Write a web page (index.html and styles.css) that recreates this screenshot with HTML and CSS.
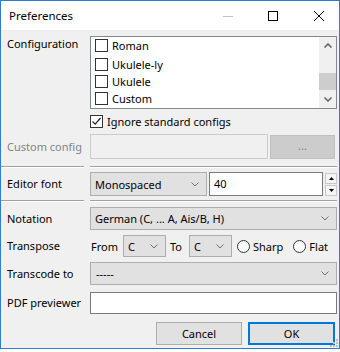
FILE: index.html
```html
<!DOCTYPE html>
<html lang="en">

<head>
    <meta charset="UTF-8">
    <title>Preferences</title>
    <link rel="stylesheet" href="styles.css">
</head>

<body>
    <div class="window">
        <div class="titlebar">
            <span class="title">Preferences</span>
            <div class="controls">
                <svg class="ctl-min" width="10" height="10" viewBox="0 0 10 10"><line x1="0" y1="5.5" x2="10" y2="5.5" stroke="#c4c4c4" stroke-width="1"/></svg>
                <svg class="ctl-max" width="10" height="10" viewBox="0 0 10 10"><rect x="0.5" y="0.5" width="9" height="9" fill="none" stroke="#000" stroke-width="1"/></svg>
                <svg class="ctl-close" width="10" height="10" viewBox="0 0 10 10"><path d="M0 0 L10 10 M10 0 L0 10" stroke="#000" stroke-width="1"/></svg>
            </div>
        </div>

        <div class="content">
            <div class="row row-config">
                <span class="label label-top">Configuration</span>
                <div class="listbox">
                    <div class="list-items">
                        <div class="item item-first"><span class="box"></span>Roman</div>
                        <div class="item"><span class="box"></span>Ukulele-ly</div>
                        <div class="item"><span class="box"></span>Ukulele</div>
                        <div class="item"><span class="box"></span>Custom</div>
                    </div>
                    <div class="scrollbar">
                        <div class="sb-btn">
                            <svg width="8" height="5" viewBox="0 0 8 5"><polyline points="0.5,4.5 4,1 7.5,4.5" fill="none" stroke="#606060" stroke-width="1.5"/></svg>
                        </div>
                        <div class="sb-track"><div class="sb-thumb"></div></div>
                        <div class="sb-btn">
                            <svg width="8" height="5" viewBox="0 0 8 5"><polyline points="0.5,0.5 4,4 7.5,0.5" fill="none" stroke="#606060" stroke-width="1.5"/></svg>
                        </div>
                    </div>
                </div>
            </div>

            <div class="row row-ignore">
                <span></span>
                <div class="check">
                    <span class="box">
                        <svg width="11" height="11" viewBox="0 0 11 11"><polyline points="1.5,5.5 4.2,8.2 9.5,2" fill="none" stroke="#222" stroke-width="1.2"/></svg>
                    </span>Ignore standard configs
                </div>
            </div>

            <div class="row row-custom">
                <span class="label disabled">Custom config</span>
                <div class="pick">
                    <div class="input input-disabled"></div>
                    <div class="btn-browse">...</div>
                </div>
            </div>

            <div class="sep"><span></span><span></span></div>

            <div class="row row-editor">
                <span class="label">Editor font</span>
                <div class="font-fields">
                    <div class="combo combo-font">Monospaced
                        <svg class="chev" width="8" height="5" viewBox="0 0 8 5"><polyline points="0.5,0.5 4,4 7.5,0.5" fill="none" stroke="#707070" stroke-width="1"/></svg>
                    </div>
                    <div class="input input-spin">40</div>
                    <div class="spin-btns">
                        <div class="spin-btn"><svg width="5" height="3" viewBox="0 0 5 3"><polygon points="0,3 2.5,0 5,3" fill="#000"/></svg></div>
                        <div class="spin-btn"><svg width="5" height="3" viewBox="0 0 5 3"><polygon points="0,0 2.5,3 5,0" fill="#000"/></svg></div>
                    </div>
                </div>
            </div>

            <div class="sep"><span></span><span></span></div>

            <div class="row row-notation">
                <span class="label">Notation</span>
                <div class="combo">German (C, ... A, Ais/B, H)
                    <svg class="chev" width="8" height="5" viewBox="0 0 8 5"><polyline points="0.5,0.5 4,4 7.5,0.5" fill="none" stroke="#707070" stroke-width="1"/></svg>
                </div>
            </div>

            <div class="row row-transpose">
                <span class="label">Transpose</span>
                <div class="transpose">
                    <span class="from">From</span>
                    <div class="combo combo-key">C
                        <svg class="chev" width="8" height="5" viewBox="0 0 8 5"><polyline points="0.5,0.5 4,4 7.5,0.5" fill="none" stroke="#707070" stroke-width="1"/></svg>
                    </div>
                    <span class="to">To</span>
                    <div class="combo combo-key">C
                        <svg class="chev" width="8" height="5" viewBox="0 0 8 5"><polyline points="0.5,0.5 4,4 7.5,0.5" fill="none" stroke="#707070" stroke-width="1"/></svg>
                    </div>
                    <span class="radio"></span><span class="radio-text">Sharp</span>
                    <span class="radio radio-flat"></span><span class="radio-text">Flat</span>
                </div>
            </div>

            <div class="row row-transcode">
                <span class="label">Transcode to</span>
                <div class="combo">-----
                    <svg class="chev" width="8" height="5" viewBox="0 0 8 5"><polyline points="0.5,0.5 4,4 7.5,0.5" fill="none" stroke="#707070" stroke-width="1"/></svg>
                </div>
            </div>

            <div class="row row-pdf">
                <span class="label">PDF previewer</span>
                <div class="input input-pdf"></div>
            </div>

            <div class="buttons">
                <div class="button">Cancel</div>
                <div class="button button-default">OK</div>
            </div>
        </div>

        <svg class="grip" width="8" height="8" viewBox="0 0 8 8">
            <rect x="6" y="0" width="2" height="2" fill="#bcbcbc"/>
            <rect x="3" y="3" width="2" height="2" fill="#bcbcbc"/>
            <rect x="6" y="3" width="2" height="2" fill="#bcbcbc"/>
            <rect x="0" y="6" width="2" height="2" fill="#bcbcbc"/>
            <rect x="3" y="6" width="2" height="2" fill="#bcbcbc"/>
            <rect x="6" y="6" width="2" height="2" fill="#bcbcbc"/>
        </svg>
    </div>
</body>

</html>
```

FILE: styles.css
```css
/* General Reset */
* {
    margin: 0;
    padding: 0;
    box-sizing: border-box;
}

body {
    font-family: 'Noto Sans', 'Open Sans', sans-serif;
    font-size: 11px;
    color: #000;
    background-color: #fff;
}

.window {
    position: relative;
    width: 340px;
    height: 349px;
    border: 1px solid #2b7fd3;
    background-color: #f0f0f0;
}

/* Title bar */
.titlebar {
    height: 29px;
    background-color: #fff;
    display: flex;
    align-items: center;
}

.title {
    margin-left: 8px;
    font-size: 11.5px;
}

.controls {
    margin-left: auto;
    margin-right: 15px;
    display: flex;
    align-items: center;
}

.controls svg {
    display: block;
}

.ctl-max {
    margin-left: 35px;
}

.ctl-close {
    margin-left: 36px;
}

/* Form */
.content {
    padding: 0 2px 0 6px;
}

.row {
    display: grid;
    grid-template-columns: 83px 1fr;
    align-items: center;
}

.label {
    line-height: 16px;
    white-space: nowrap;
}

.label-top {
    align-self: start;
}

.disabled {
    color: #838383;
}

.row-config {
    margin-top: 6px;
}

.row-ignore {
    margin-top: 4px;
    height: 17px;
}

.row-custom {
    margin-top: 4px;
}

.row-editor {
    margin-top: 4px;
}

.row-notation {
    margin-top: 5px;
}

.row-transpose {
    margin-top: 5px;
}

.row-transcode {
    margin-top: 5px;
}

.row-pdf {
    margin-top: 7px;
}

/* List with checkboxes */
.listbox {
    height: 73px;
    border: 1px solid #828790;
    background-color: #fff;
    display: flex;
}

.list-items {
    flex: 1;
}

.item {
    height: 17px;
    display: flex;
    align-items: center;
    padding-left: 4px;
}

.item-first {
    height: 19px;
    padding-bottom: 2px;
}

.box {
    width: 13px;
    height: 13px;
    border: 1px solid #333;
    background-color: #fff;
    margin-right: 4px;
    display: flex;
    align-items: center;
    justify-content: center;
}

.scrollbar {
    width: 17px;
    background-color: #f0f0f0;
    display: flex;
    flex-direction: column;
}

.sb-btn {
    height: 17px;
    display: flex;
    align-items: center;
    justify-content: center;
}

.sb-track {
    flex: 1;
    padding-top: 19px;
}

.sb-thumb {
    height: 17px;
    background-color: #cdcdcd;
}

.check {
    display: flex;
    align-items: center;
}

/* Inputs */
.input {
    height: 22px;
    border: 1px solid #7a7a7a;
    background-color: #fff;
    padding-left: 4px;
    line-height: 20px;
}

.pick {
    display: flex;
    gap: 2px;
}

.input-disabled {
    flex: 1;
    height: 25px;
    border-color: #cccccc;
    background-color: #f0f0f0;
}

.btn-browse {
    width: 65px;
    height: 24px;
    margin-top: 1px;
    margin-right: 2px;
    background-color: #cccccc;
    border: 1px solid #bfbfbf;
    color: #838383;
    text-align: center;
    line-height: 20px;
}

.sep {
    display: grid;
    grid-template-columns: 83px 1fr;
    column-gap: 6px;
    margin-left: -6px;
    height: 2px;
}

.sep span {
    border-top: 1px solid #a0a0a0;
    border-bottom: 1px solid #fff;
}

.row-custom + .sep {
    margin-top: 7px;
}

.row-editor + .sep {
    margin-top: 4px;
}

/* Combo boxes */
.combo {
    height: 23px;
    border: 1px solid #adadad;
    background-color: #e1e1e1;
    display: flex;
    align-items: center;
    padding-left: 4px;
    white-space: nowrap;
}

.chev {
    margin-left: auto;
    margin-right: 7px;
}

.font-fields {
    display: flex;
    align-items: center;
}

.combo-font {
    width: 117px;
    height: 24px;
}

.input-spin {
    width: 114px;
    height: 24px;
    margin-left: 2px;
    line-height: 22px;
}

.spin-btns {
    margin-left: 2px;
    display: flex;
    flex-direction: column;
    gap: 1px;
}

.spin-btn {
    width: 12px;
    height: 11px;
    border: 1px solid #c9c9c9;
    background-color: #f4f4f4;
    display: flex;
    align-items: center;
    justify-content: center;
}

.transpose {
    display: flex;
    align-items: center;
}

.from {
    margin-left: 1px;
}

.combo-key {
    width: 43px;
    height: 22px;
    margin-left: 5px;
}

.to {
    margin-left: 4px;
    margin-right: 2px;
}

.radio {
    width: 13px;
    height: 13px;
    border: 1px solid #333;
    border-radius: 50%;
    background-color: #fff;
    margin-left: 5px;
    margin-right: 3px;
}

.radio-flat {
    margin-left: 10px;
}

.row-transcode .combo {
    padding-left: 5px;
}

.input-pdf {
    height: 22px;
}

/* Dialog buttons */
.buttons {
    margin-top: 8px;
    margin-right: 2px;
    display: flex;
    justify-content: flex-end;
    gap: 6px;
}

.button {
    width: 86px;
    height: 23px;
    border: 1px solid #adadad;
    background-color: #e1e1e1;
    text-align: center;
    line-height: 21px;
}

.button-default {
    width: 87px;
    border: 2px solid #0078d7;
    line-height: 19px;
}

.grip {
    position: absolute;
    right: 1px;
    bottom: 1px;
}
```
